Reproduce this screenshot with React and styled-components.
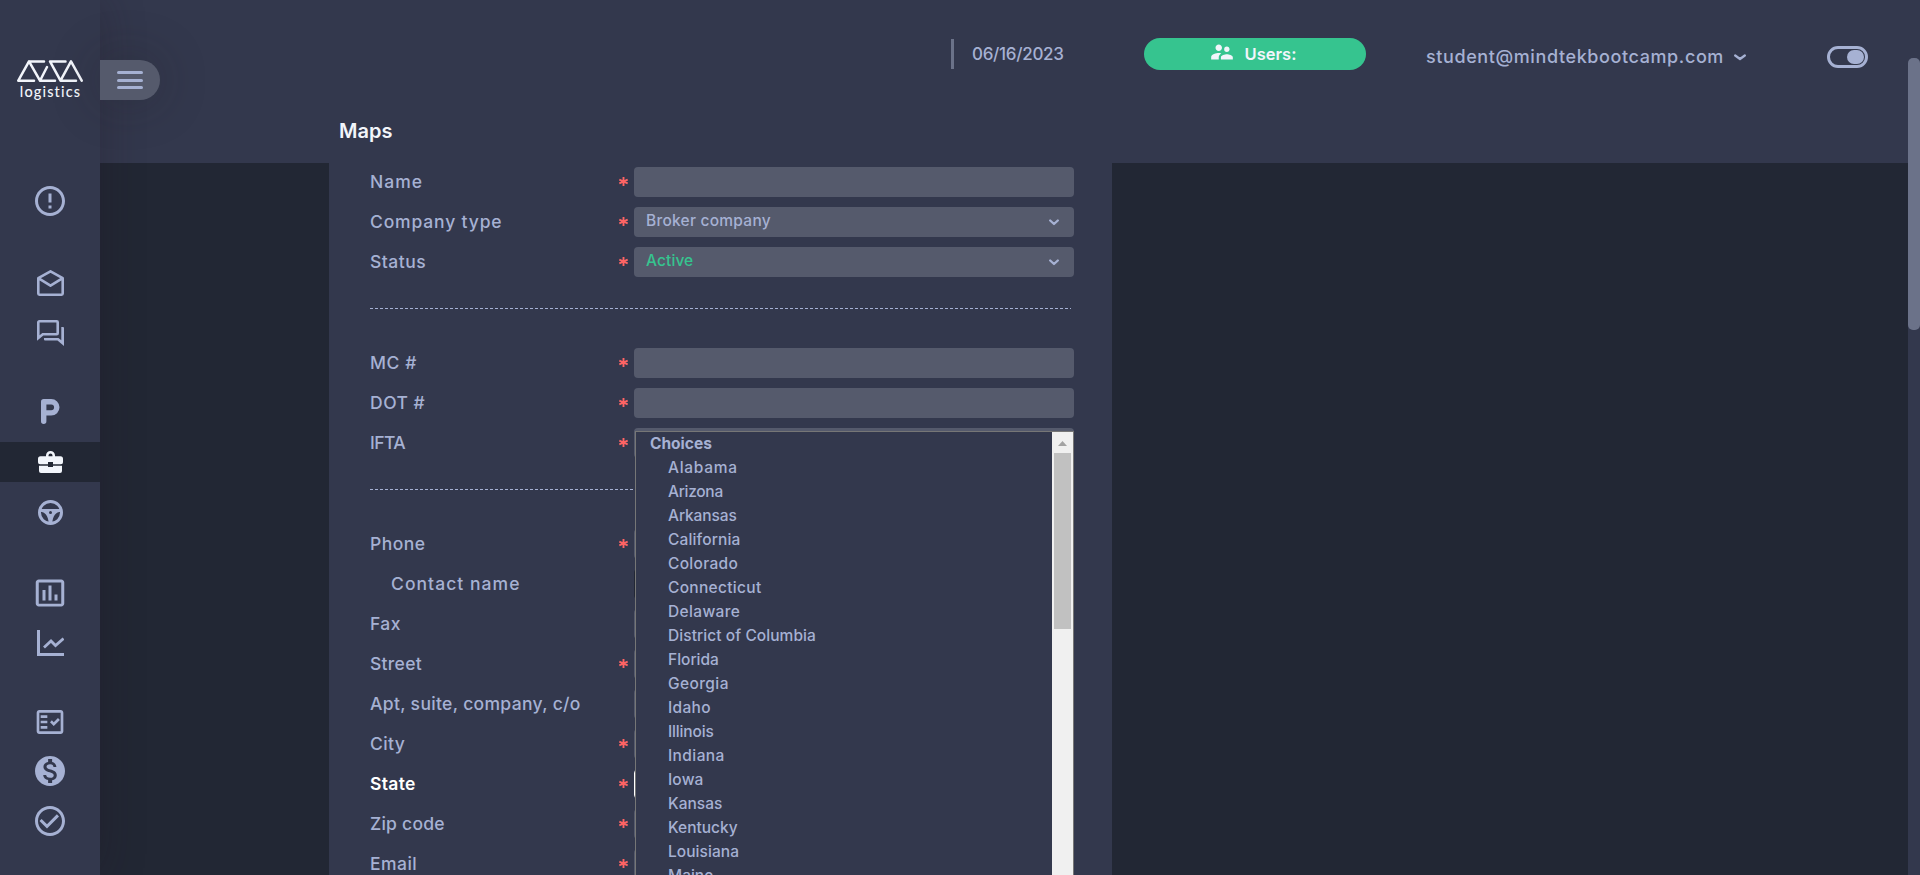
import React from "react";
import styled, { createGlobalStyle, css } from "styled-components";
import {
  MdErrorOutline,
  MdInsertChartOutlined,
  MdOutlineFactCheck,
  MdMonetizationOn,
  MdCheckCircleOutline,
  MdSupervisorAccount,
} from "react-icons/md";

const c = {
  panel: "#33384d",
  dark: "#222734",
  text: "#a6b1d3",
  field: "#555a6c",
  green: "#36c48f",
  red: "#ff6464",
  white: "#f2f5fb",
  thumb: "#6b7289",
};

const GlobalStyle = createGlobalStyle`
  * { box-sizing: border-box; }
  html, body { margin: 0; height: 875px; overflow: hidden; }
  body {
    background: ${c.dark};
    color: ${c.text};
    font-family: Inter, "Liberation Sans", sans-serif;
    font-weight: 500;
    font-size: 17.5px;
  }
  svg { display: block; flex: none; }
`;

const Shell = styled.div`
  display: flex;
  width: 1920px;
  height: 875px;
  overflow: hidden;
`;

const Sidebar = styled.aside`
  position: relative;
  z-index: 3;
  flex: 0 0 100px;
  background: ${c.panel};
  box-shadow: 0 0 45px rgba(32, 20, 32, 0.28);
`;

const Logo = styled.div`
  display: flex;
  flex-direction: column;
  align-items: center;
  height: 103px;
  padding-top: 60px;
  color: ${c.white};
`;

const LogoText = styled.span`
  font: 500 14.5px/18px Lato, sans-serif;
  letter-spacing: 1.15px;
  margin-top: 1px;
  padding-left: 1px;
`;

const MenuTab = styled.button`
  position: absolute;
  left: 100px;
  top: 60px;
  width: 60px;
  height: 40px;
  display: flex;
  flex-direction: column;
  justify-content: center;
  align-items: flex-start;
  gap: 4.5px;
  padding: 0 0 0 17px;
  border: 0;
  border-radius: 0 20px 20px 0;
  background: ${c.field};
  box-shadow: 0 0 50px rgba(32, 30, 32, 0.28);
`;

const MenuBar = styled.span`
  width: 26px;
  height: 3px;
  border-radius: 1.5px;
  background: ${c.text};
`;

const Nav = styled.nav`
  display: flex;
  flex-direction: column;
`;

const NavItem = styled.a`
  display: flex;
  align-items: center;
  justify-content: center;
  height: 40px;
  margin-top: ${(p) => p.$gap}px;
  color: ${(p) => (p.$active ? c.white : c.text)};
  background: ${(p) => (p.$active ? c.dark : "transparent")};
`;

const Main = styled.main`
  flex: 1;
  display: flex;
  flex-direction: column;
  min-width: 0;
`;

const Header = styled.header`
  flex: 0 0 163px;
  background: ${c.panel};
  display: flex;
  flex-direction: column;
`;

const TopBar = styled.div`
  display: flex;
  align-items: flex-start;
  height: 113px;
  padding: 38px 40px 0 851px;
`;

const DateBox = styled.div`
  width: 193px;
  height: 30px;
  margin-top: 1px;
  padding-left: 18px;
  border-left: 3px solid ${c.thumb};
  font-size: 17px;
  line-height: 30px;
  letter-spacing: -0.3px;
`;

const UsersButton = styled.button`
  width: 222px;
  height: 32px;
  display: flex;
  align-items: center;
  justify-content: center;
  gap: 10px;
  padding: 0 5px 0 0;
  border: 0;
  border-radius: 16px;
  background: ${c.green};
  color: ${c.white};
  font: inherit;
  font-size: 16.5px;
  font-weight: 600;
`;

const UsersIcon = styled.span`
  padding-bottom: 4px;
`;

const Account = styled.div`
  display: flex;
  align-items: center;
  gap: 10px;
  width: 461px;
  margin-top: 4px;
  padding-left: 60px;
  font-size: 18px;
  line-height: 30px;
`;

const Toggle = styled.div`
  width: 41px;
  height: 22px;
  margin-top: 8px;
  padding: 1px;
  border: 3px solid ${c.text};
  border-radius: 11px;
  display: flex;
  justify-content: flex-end;
`;

const Knob = styled.span`
  width: 17px;
  height: 14px;
  border-radius: 8px;
  background: ${c.text};
`;

const Title = styled.h1`
  margin: 0;
  padding-left: 239px;
  font-size: 20px;
  line-height: 36px;
  font-weight: 600;
  color: ${c.white};
`;

const Form = styled.form`
  width: 783px;
  height: 712px;
  margin-left: 229px;
  padding: 4px 38px 0 41px;
  overflow: hidden;
  background: ${c.panel};
`;

const Row = styled.div`
  display: flex;
  height: 30px;
  margin-bottom: 10px;
  ${(p) => p.$focused && css`color: #fff; font-weight: 600;`}
`;

const Label = styled.label`
  width: 246px;
  padding-left: ${(p) => (p.$indent ? 21 : 0)}px;
  line-height: 30px;
  white-space: nowrap;
`;

const Tracked = styled.span`
  letter-spacing: ${(p) => p.$ls || 0}px;
  white-space: nowrap;
`;

const Star = styled.span`
  width: 18px;
  display: flex;
  align-items: center;
  padding: 0 0 2px 3px;
`;

const Field = styled.div`
  width: 440px;
  height: 30px;
  display: flex;
  justify-content: space-between;
  align-items: center;
  padding: 0 15px 0 12px;
  border-radius: 4px;
  background: ${(p) => (p.$tone === "dark" ? c.dark : c.field)};
  ${(p) => p.$tone === "focus" && css`border: 1px solid #fff;`}
  color: ${c.text};
  font-size: 15.5px;
`;

const Value = styled(Tracked)`
  padding-bottom: 3px;
  color: ${(p) => (p.$ok ? c.green : c.text)};
`;

const Divider = styled.hr`
  width: 701px;
  height: 1px;
  margin: 31px 0 39px;
  border: 0;
  background: repeating-linear-gradient(90deg, ${c.text} 0 3px, transparent 3px 5px);
`;

const Dropdown = styled.div`
  position: absolute;
  z-index: 2;
  left: 635px;
  top: 431px;
  width: 439px;
  height: 444px;
  display: flex;
  border: 1px solid #767676;
  border-bottom: 0;
  background: ${c.panel};
  font-size: 15.5px;
  overflow: hidden;
`;

const Options = styled.ul`
  flex: 1;
  margin: 0;
  padding: 0;
  list-style: none;
`;

const Option = styled.li`
  height: 24px;
  line-height: 24px;
  padding-left: ${(p) => (p.$group ? 14 : 32)}px;
  font-weight: ${(p) => (p.$group ? 700 : 500)};
`;

const ListScroll = styled.div`
  width: 21px;
  padding: 9px 2px 0;
  background: #f0f0f0;
  display: flex;
  flex-direction: column;
  align-items: center;
`;

const ListThumb = styled.div`
  width: 17px;
  height: 176px;
  margin-top: 7px;
  background: #c1c1c1;
`;

const PageScroll = styled.div`
  flex: 0 0 12px;
  padding-top: 58px;
  background: ${c.panel};
`;

const PageThumb = styled.div`
  height: 272px;
  border-radius: 5px;
  background: ${c.thumb};
`;

const LogoMark = () => (
  <svg width="66" height="22" viewBox="0 0 66 22" fill="none" stroke="currentColor" strokeWidth="2.5" strokeLinecap="round" strokeLinejoin="round">
    <path d="M27 1.4H12L1.3 20.7H17M12 1.4L23 20.7L30 7M23 20.7H38M48.5 1.4H33L43.5 20.7H59M43.5 20.7L54 1.4L64.7 20.7" />
  </svg>
);

const MailIcon = () => (
  <svg width="27" height="26" viewBox="0 0 27 26" fill="none" stroke="currentColor" strokeWidth="2.6" strokeLinejoin="round">
    <path d="M1.3 8.2L13.5 1.3L25.7 8.2V23.6A1.1 1.1 0 0 1 24.600 24.700H2.400A1.100 1.100 0 0 1 1.300 23.600ZM1.300 8.200L13.500 15.700L25.700 8.200" />
  </svg>
);

const ChatIcon = () => (
  <svg width="27" height="26" viewBox="0 0 27 26" fill="currentColor">
    <path d="M1.3 18V2.3A1 1 0 0 1 2.3 1.3H19.700A1 1 0 0 1 20.700 2.300V13.200A1 1 0 0 1 19.700 14.200H5.800Z" fill="none" stroke="currentColor" strokeWidth="2.6" />
    <path d="M24.300 7H26A1 1 0 0 1 27 8V26L20.500 20.500H8A1 1 0 0 1 7 19.500V18H21.500L24.300 20.200Z" />
  </svg>
);

const ParkingIcon = () => (
  <svg width="19" height="25" viewBox="0 0 19 25" fill="none" stroke="currentColor" strokeWidth="5.4" strokeLinecap="round" strokeLinejoin="round">
    <path d="M2.700 22.300V2.700H10.200A5.600 5.600 0 0 1 10.200 13.900H2.700" />
  </svg>
);

const BriefcaseIcon = () => (
  <svg width="25" height="22" viewBox="0 0 25 22" fill="currentColor">
    <path d="M8 5.200V4.500A4.500 4.500 0 0 1 17 4.500V5.200H22.500A2.500 2.500 0 0 1 25 7.700V11.200A2 2 0 0 1 23 13.200H15V11H10V13.200H2A2 2 0 0 1 0 11.200V7.700A2.500 2.500 0 0 1 2.500 5.200ZM10.500 5.200H14.500V4.500A2 2 0 0 0 10.500 4.500Z" />
    <path d="M1 14.700H10V16H15V14.700H24V20A2 2 0 0 1 22 22H3A2 2 0 0 1 1 20Z" />
  </svg>
);

const WheelIcon = () => (
  <svg width="25" height="25" viewBox="0 0 25 25" fill="currentColor">
    <circle cx="12.500" cy="12.500" r="11" fill="none" stroke="currentColor" strokeWidth="3" />
    <path fillRule="evenodd" d="M2 9H23V11.800C18 12 14.600 16 14.300 23.500H10.700C10.400 16 7 12 2 11.800ZM12.500 11A1.500 1.500 0 1 0 12.500 14A1.500 1.500 0 1 0 12.500 11Z" />
  </svg>
);

const TrendIcon = () => (
  <svg width="27" height="26" viewBox="0 0 27 26" fill="none" stroke="currentColor" strokeWidth="3">
    <path d="M1.500 0V24.500H27" />
    <path d="M7 17.500L14 11L18.500 15.500L26.500 8.500" strokeWidth="2.800" />
  </svg>
);

const Chevron = ({ w = 10, h = 6 }) => (
  <svg width={w} height={h + 1} viewBox={`0 0 ${w} ${h + 1}`} fill="none" stroke="currentColor" strokeWidth="2.3" strokeLinecap="round" strokeLinejoin="round">
    <path d={`M1.200 1.500L${w / 2} ${h - 1}L${w - 1.2} 1.500`} />
  </svg>
);

const Asterisk = () => (
  <svg width="9" height="9" viewBox="0 0 9 9" stroke={c.red} strokeWidth="1.9">
    <path d="M4.500 0V9M0.300 2.500L8.700 6.500M8.700 2.500L0.300 6.500" />
  </svg>
);

const UpArrow = () => (
  <svg width="9" height="5" viewBox="0 0 9 5" fill="#a3a3a3">
    <path d="M0 5L4.500 0L9 5Z" />
  </svg>
);

const navItems = [
  { icon: <MdErrorOutline size={36} />, gap: 78 },
  { icon: <MailIcon />, gap: 42 },
  { icon: <ChatIcon />, gap: 10 },
  { icon: <ParkingIcon />, gap: 38 },
  { icon: <BriefcaseIcon />, gap: 11, active: true },
  { icon: <WheelIcon />, gap: 10 },
  { icon: <MdInsertChartOutlined size={36} />, gap: 41 },
  { icon: <TrendIcon />, gap: 10 },
  { icon: <MdOutlineFactCheck size={32} />, gap: 39 },
  { icon: <MdMonetizationOn size={36} />, gap: 9 },
  { icon: <MdCheckCircleOutline size={36} />, gap: 10 },
];

const sections = [
  [
    { label: "Name", ls: 1, required: true },
    { label: "Company type", ls: 0.84, required: true, value: "Broker company", valueLs: 0.25 },
    { label: "Status", ls: 0.5, required: true, value: "Active", valueLs: 0.1, ok: true },
  ],
  [
    { label: "MC #", ls: 0.6, required: true },
    { label: "DOT #", ls: 0.5, required: true },
    { label: "IFTA", ls: -0.6, required: true },
  ],
  [
    { label: "Phone", ls: 0.45, required: true },
    { label: "Contact name", ls: 1.05, indent: true, tone: "dark" },
    { label: "Fax", ls: 0.4 },
    { label: "Street", ls: 0.3, required: true },
    { label: "Apt, suite, company, c/o", ls: 0.33 },
    { label: "City", ls: 0.4, required: true },
    { label: "State", ls: 0.35, required: true, tone: "focus" },
    { label: "Zip code", ls: 0.25, required: true },
    { label: "Email", ls: 0.45, required: true },
  ],
];

const states = [
  ["Alabama", 0.7],
  ["Arizona", -0.3],
  ["Arkansas", -0.1],
  ["California", 0.15],
  ["Colorado", 0.3],
  ["Connecticut", 0.3],
  ["Delaware", 0.35],
  ["District of Columbia", 0.07],
  ["Florida", 0],
  ["Georgia", 0.4],
  ["Idaho", 0.3],
  ["Illinois", -0.15],
  ["Indiana", 0.4],
  ["Iowa", 0.15],
  ["Kansas", 0],
  ["Kentucky", 0],
  ["Louisiana", 0.05],
  ["Maine", 0],
];

const FormRow = ({ row }) => (
  <Row $focused={row.tone === "focus"}>
    <Label $indent={row.indent}>
      <Tracked $ls={row.ls}>{row.label}</Tracked>
    </Label>
    <Star>{row.required && <Asterisk />}</Star>
    <Field $tone={row.tone}>
      {row.value && (
        <>
          <Value $ls={row.valueLs} $ok={row.ok}>{row.value}</Value>
          <Chevron />
        </>
      )}
    </Field>
  </Row>
);

export default function App() {
  return (
    <>
      <GlobalStyle />
      <Shell>
        <Sidebar>
          <Logo>
            <LogoMark />
            <LogoText>logistics</LogoText>
          </Logo>
          <MenuTab>
            <MenuBar />
            <MenuBar />
            <MenuBar />
          </MenuTab>
          <Nav>
            {navItems.map((item, i) => (
              <NavItem key={i} $gap={item.gap} $active={item.active}>
                {item.icon}
              </NavItem>
            ))}
          </Nav>
        </Sidebar>
        <Main>
          <Header>
            <TopBar>
              <DateBox>06/16/2023</DateBox>
              <UsersButton>
                <UsersIcon>
                  <MdSupervisorAccount size={26} />
                </UsersIcon>
                Users:
              </UsersButton>
              <Account>
                <Tracked $ls={0.6}>student@mindtekbootcamp.com</Tracked>
                <Chevron w={12} h={6} />
              </Account>
              <Toggle>
                <Knob />
              </Toggle>
            </TopBar>
            <Title>Maps</Title>
          </Header>
          <Form>
            {sections.map((rows, i) => (
              <React.Fragment key={i}>
                {i > 0 && <Divider />}
                {rows.map((row) => (
                  <FormRow key={row.label} row={row} />
                ))}
              </React.Fragment>
            ))}
          </Form>
        </Main>
        <PageScroll>
          <PageThumb />
        </PageScroll>
        <Dropdown>
          <Options>
            <Option $group>Choices</Option>
            {states.map(([name, ls]) => (
              <Option key={name}>
                <Tracked $ls={ls}>{name}</Tracked>
              </Option>
            ))}
          </Options>
          <ListScroll>
            <UpArrow />
            <ListThumb />
          </ListScroll>
        </Dropdown>
      </Shell>
    </>
  );
}
